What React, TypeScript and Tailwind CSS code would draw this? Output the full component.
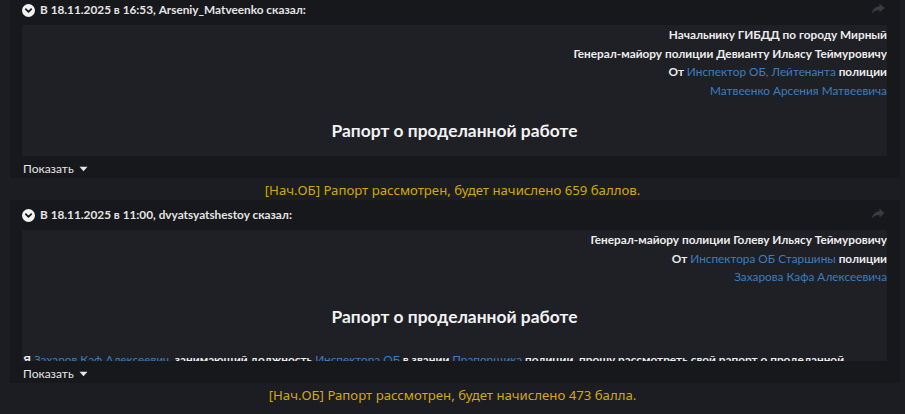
import React from "react";

const body = { fontFamily: 'Lato, "Noto Sans", sans-serif' };
const head = { fontFamily: 'Lato, "Noto Sans", sans-serif' };
const yellowFont = { fontFamily: '"Noto Sans", "Open Sans", sans-serif' };

function ToggleIcon() {
  return (
    <svg width="13" height="13" viewBox="0 0 13 13" className="shrink-0">
      <circle cx="6.5" cy="6.5" r="6.5" fill="#f2f2f2" />
      <path d="M3.8 5.2 L6.5 7.9 L9.2 5.2" stroke="#17181c" strokeWidth="1.8" fill="none" strokeLinecap="round" strokeLinejoin="round" />
    </svg>
  );
}

function ShareIcon() {
  return (
    <svg width="14" height="12" viewBox="0 0 14 12" className="shrink-0">
      <path d="M8.5 0.5 L13.5 5 L8.5 9.5 L8.5 7 C5 7 2.5 8 0.8 11 C1.3 6.5 3.8 3.8 8.5 3.2 Z" fill="#3a3b41" />
    </svg>
  );
}

const L = ({ children }: { children: React.ReactNode }) => (
  <span className="text-[#3a7ebf] font-normal">{children}</span>
);

function Quote({
  header,
  lines,
  extra,
}: {
  header: string;
  lines: React.ReactNode[];
  extra?: React.ReactNode;
}) {
  return (
    <div className="ml-[10px] mr-[5px] bg-[#17181c]">
      <div className="h-[30px] flex items-center pl-[12px] pr-[15px]">
        <ToggleIcon />
        <span style={head} className="ml-[5px] text-[11.8px] font-bold text-[#e4e4e4] flex-1">
          {header}
        </span>
        <div className="mt-[-2px]">
          <ShareIcon />
        </div>
      </div>
      <div className="ml-[12px] mr-[13px] bg-[#1f2026] h-[131px] overflow-hidden">
        <div style={body} className="text-right text-[11.8px] font-bold text-[#ececec] leading-[18.7px] pt-[1px]">
          {lines.map((l, i) => (
            <div key={i}>{l}</div>
          ))}
        </div>
        <div style={body} className="text-center text-[17.4px] font-bold text-[#f2f2f2] leading-[24px] mt-[18px]">
          Рапорт о проделанной работе
        </div>
        {extra}
      </div>
      <div style={body} className="h-[22px] pt-[4px] flex items-center pl-[13px] text-[12px] text-[#e6e6e6]">
        Показать
        <svg width="9" height="6" viewBox="0 0 9 6" className="ml-[5px]">
          <path d="M0.5 0.8 L8.5 0.8 L4.5 5.2 Z" fill="#e6e6e6" />
        </svg>
      </div>
    </div>
  );
}

function Yellow({ children }: { children: React.ReactNode }) {
  return (
    <div style={yellowFont} className="h-[22px] pt-[3px] flex items-center justify-center text-[13.2px] text-[#d4a900]">
      {children}
    </div>
  );
}

export default function App() {
  return (
    <div className="w-[905px] h-[414px] bg-[#1c1d22] overflow-hidden">
      <div className="-mt-[5px]">
        <Quote
          header="В 18.11.2025 в 16:53, Arseniy_Matveenko сказал:"
          lines={[
            "Начальнику ГИБДД по городу Мирный",
            "Генерал-майору полиции Девианту Ильясу Теймуровичу",
            <>
              От <L>Инспектор ОБ, Лейтенанта</L> полиции
            </>,
            <L>Матвеенко Арсения Матвеевича</L>,
          ]}
        />
        <Yellow>[Нач.ОБ] Рапорт рассмотрен, будет начислено 659 баллов.</Yellow>
        <Quote
          header="В 18.11.2025 в 11:00, dvyatsyatshestoy сказал:"
          lines={[
            "Генерал-майору полиции Голеву Ильясу Теймуровичу",
            <>
              От <L>Инспектора ОБ Старшины</L> полиции
            </>,
            <L>Захарова Кафа Алексеевича</L>,
          ]}
          extra={
            <div style={body} className="mt-[22px] pl-[1px] text-[11.8px] font-bold text-[#ececec] leading-[18.7px] whitespace-nowrap">
              Я <L>Захаров Каф Алексеевич</L>, занимающий должность <L>Инспектора ОБ</L> в звании{" "}
              <L>Прапорщика</L> полиции, прошу рассмотреть свой рапорт о проделанной
            </div>
          }
        />
        <Yellow>[Нач.ОБ] Рапорт рассмотрен, будет начислено 473 балла.</Yellow>
      </div>
    </div>
  );
}
